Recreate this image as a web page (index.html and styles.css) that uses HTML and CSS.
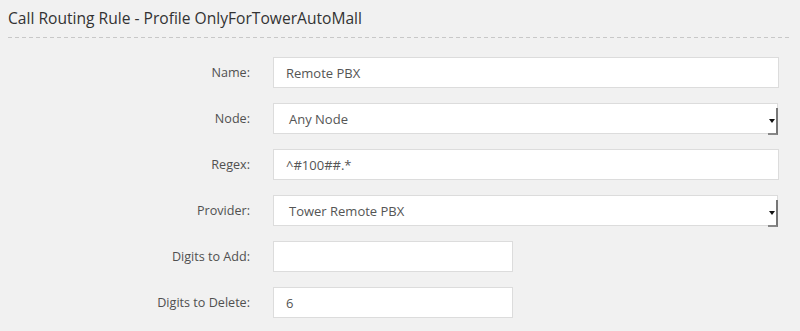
FILE: index.html
```html
<!DOCTYPE html>
<html>
<head>
<meta charset="utf-8">
<link rel="stylesheet" href="styles.css">
</head>
<body>
<div class="page">
  <h1 class="title">Call Routing Rule - Profile OnlyForTowerAutoMall</h1>
  <div class="divider"></div>
  <form class="form">
    <label class="label">Name:</label>
    <div class="field wide"><span class="val">Remote PBX</span></div>

    <label class="label">Node:</label>
    <div class="field wide select"><span class="val sel">Any Node</span><span class="arrow"></span></div>

    <label class="label">Regex:</label>
    <div class="field wide"><span class="val">^#100##.*</span></div>

    <label class="label">Provider:</label>
    <div class="field wide select"><span class="val sel">Tower Remote PBX</span><span class="arrow"></span></div>

    <label class="label">Digits to Add:</label>
    <div class="field short"><span class="val"></span></div>

    <label class="label">Digits to Delete:</label>
    <div class="field short"><span class="val">6</span></div>
  </form>
</div>
</body>
</html>
```

FILE: styles.css
```css
html, body {
  margin: 0;
  padding: 0;
  background: #f1f1f1;
}
.page {
  width: 800px;
  height: 331px;
  overflow: hidden;
  font-family: "Open Sans", "Liberation Sans", sans-serif;
}
.title {
  margin: 0;
  padding: 7px 8px 0;
  font-size: 15.6px;
  line-height: 22px;
  font-weight: 400;
  color: #333;
}
.divider {
  margin: 8px 8px 0;
  height: 1px;
  background-image: repeating-linear-gradient(90deg, #c8c8c8 0 4px, transparent 4px 7px);
}
.form {
  display: grid;
  grid-template-columns: 250px auto;
  column-gap: 23px;
  row-gap: 15px;
  padding-top: 19px;
  justify-items: start;
}
.label {
  justify-self: end;
  align-self: center;
  font-size: 12.6px;
  color: #505050;
  line-height: 18px;
}
.field {
  position: relative;
  box-sizing: border-box;
  height: 31px;
  background: #fff;
  border: 1px solid #dcdcdc;
  display: flex;
  align-items: center;
  padding-left: 12px;
}
.wide { width: 506px; }
.short { width: 240px; }
.select { width: 505px; }
.val {
  font-size: 13px;
  color: #555;
}
.sel { padding-left: 3px; }
.arrow {
  position: absolute;
  right: -1px;
  top: 4px;
  width: 8px;
  height: 25px;
  border-right: 2px solid #777;
  border-bottom: 2px solid #888;
}
.arrow::after {
  content: "";
  position: absolute;
  left: 1px;
  top: 11px;
  border-left: 3px solid transparent;
  border-right: 3px solid transparent;
  border-top: 4px solid #111;
}
```
